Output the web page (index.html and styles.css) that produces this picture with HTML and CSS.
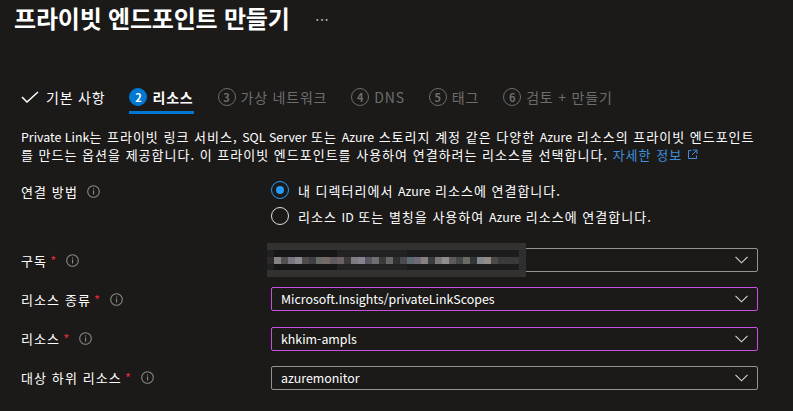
FILE: index.html
```html
<!DOCTYPE html>
<html lang="ko">
<head>
<meta charset="utf-8">
<link rel="stylesheet" href="styles.css">
</head>
<body>
<header class="title-bar">
  <h1 class="title">프라이빗 엔드포인트 만들기</h1>
  <span class="more">...</span>
</header>

<nav class="tabs">
  <div class="tab done">
    <svg class="check" width="18" height="12" viewBox="0 0 18 12"><polyline points="1,6 6,11 17,1" fill="none" stroke="#ffffff" stroke-width="1.5"/></svg>
    <span>기본 사항</span>
  </div>
  <div class="tab active">
    <span class="num">2</span>
    <span>리소스</span>
  </div>
  <div class="tab disabled">
    <span class="num">3</span>
    <span>가상 네트워크</span>
  </div>
  <div class="tab disabled">
    <span class="num">4</span>
    <span>DNS</span>
  </div>
  <div class="tab disabled">
    <span class="num">5</span>
    <span>태그</span>
  </div>
  <div class="tab disabled">
    <span class="num">6</span>
    <span>검토 + 만들기</span>
  </div>
</nav>

<p class="desc"><span class="en">Private Link</span>는 프라이빗 링크 서비스, <span class="en">SQL Server</span> 또는 <span class="en">Azure</span> 스토리지 계정 같은 다양한 <span class="en">Azure</span> 리소스의 프라이빗 엔드포인트<br>를 만드는 옵션을 제공합니다. 이 프라이빗 엔드포인트를 사용하여 연결하려는 리소스를 선택합니다. <a class="link" href="#">자세한 정보 <svg width="11" height="11" viewBox="0 0 11 11"><path d="M4.5 1.5H1.5V9.5H9.5V6.5M6 1H10V5M10 1L5 6" fill="none" stroke="#3f8fdc" stroke-width="1"/></svg></a></p>

<div class="form">
  <div class="row radio-row">
    <div class="label"><span>연결 방법</span><svg class="info" width="13" height="13" viewBox="0 0 13 13"><circle cx="6.5" cy="6.5" r="5.8" fill="none" stroke="#8a8886" stroke-width="1.1"/><rect x="6" y="5.5" width="1.1" height="4" fill="#8a8886"/><rect x="6" y="3.4" width="1.1" height="1.1" fill="#8a8886"/></svg></div>
    <div class="radios">
      <label class="radio checked"><span class="dot"></span><span>내 디렉터리에서 <span class="en">Azure</span> 리소스에 연결합니다.</span></label>
      <label class="radio"><span class="dot"></span><span>리소스 <span class="en">ID</span> 또는 별칭을 사용하여 <span class="en">Azure</span> 리소스에 연결합니다.</span></label>
    </div>
  </div>

  <div class="fields">
    <div class="row">
      <div class="label"><span>구독</span><span class="req">*</span><svg class="info" width="13" height="13" viewBox="0 0 13 13"><circle cx="6.5" cy="6.5" r="5.8" fill="none" stroke="#8a8886" stroke-width="1.1"/><rect x="6" y="5.5" width="1.1" height="4" fill="#8a8886"/><rect x="6" y="3.4" width="1.1" height="1.1" fill="#8a8886"/></svg></div>
      <div class="select">
        <span class="value"></span>
        <svg class="chev" width="13" height="8" viewBox="0 0 13 8"><polyline points="0.5,0.8 6.5,6.8 12.5,0.8" fill="none" stroke="#d6d6d6" stroke-width="1.1"/></svg>
        <div class="mosaic"></div>
      </div>
    </div>
    <div class="row">
      <div class="label"><span>리소스 종류</span><span class="req">*</span><svg class="info" width="13" height="13" viewBox="0 0 13 13"><circle cx="6.5" cy="6.5" r="5.8" fill="none" stroke="#8a8886" stroke-width="1.1"/><rect x="6" y="5.5" width="1.1" height="4" fill="#8a8886"/><rect x="6" y="3.4" width="1.1" height="1.1" fill="#8a8886"/></svg></div>
      <div class="select dirty">
        <span class="value">Microsoft.Insights/privateLinkScopes</span>
        <svg class="chev" width="13" height="8" viewBox="0 0 13 8"><polyline points="0.5,0.8 6.5,6.8 12.5,0.8" fill="none" stroke="#d6d6d6" stroke-width="1.1"/></svg>
      </div>
    </div>
    <div class="row">
      <div class="label"><span>리소스</span><span class="req">*</span><svg class="info" width="13" height="13" viewBox="0 0 13 13"><circle cx="6.5" cy="6.5" r="5.8" fill="none" stroke="#8a8886" stroke-width="1.1"/><rect x="6" y="5.5" width="1.1" height="4" fill="#8a8886"/><rect x="6" y="3.4" width="1.1" height="1.1" fill="#8a8886"/></svg></div>
      <div class="select dirty">
        <span class="value">khkim-ampls</span>
        <svg class="chev" width="13" height="8" viewBox="0 0 13 8"><polyline points="0.5,0.8 6.5,6.8 12.5,0.8" fill="none" stroke="#d6d6d6" stroke-width="1.1"/></svg>
      </div>
    </div>
    <div class="row">
      <div class="label"><span>대상 하위 리소스</span><span class="req">*</span><svg class="info" width="13" height="13" viewBox="0 0 13 13"><circle cx="6.5" cy="6.5" r="5.8" fill="none" stroke="#8a8886" stroke-width="1.1"/><rect x="6" y="5.5" width="1.1" height="4" fill="#8a8886"/><rect x="6" y="3.4" width="1.1" height="1.1" fill="#8a8886"/></svg></div>
      <div class="select">
        <span class="value">azuremonitor</span>
        <svg class="chev" width="13" height="8" viewBox="0 0 13 8"><polyline points="0.5,0.8 6.5,6.8 12.5,0.8" fill="none" stroke="#d6d6d6" stroke-width="1.1"/></svg>
      </div>
    </div>
  </div>
</div>
</body>
</html>
```

FILE: styles.css
```css
* { box-sizing: border-box; }

html, body {
  margin: 0;
  padding: 0;
  background: #1b1a19;
  color: #ffffff;
  font-family: "Noto Sans CJK KR", "Noto Sans", sans-serif;
  font-size: 13px;
  letter-spacing: 1px;
  overflow: hidden;
}

.en {
  font-size: 12.4px;
  letter-spacing: 0;
}

.title-bar {
  display: flex;
  align-items: center;
  height: 36px;
  padding-left: 14px;
}

.title {
  margin: 0;
  font-size: 24px;
  font-weight: 700;
  line-height: 36px;
  letter-spacing: -0.2px;
}

.more {
  margin-left: 26px;
  margin-top: -6px;
  color: #c8c6c4;
  font-size: 13px;
  letter-spacing: 1px;
}

.tabs {
  display: flex;
  margin-top: 49px;
  padding-left: 21px;
  height: 29px;
}

.tab {
  display: flex;
  align-items: center;
  gap: 5px;
  height: 29px;
  padding-bottom: 3px;
  border-bottom: 3px solid transparent;
  font-size: 14px;
  letter-spacing: 0.8px;
  margin-right: 24px;
  white-space: nowrap;
}

.tab.done { gap: 7px; }

.tab.active {
  border-bottom-color: #0078d4;
  font-weight: 700;
}

.tab.disabled { color: #6e6d6c; }

.num {
  display: inline-flex;
  align-items: center;
  justify-content: center;
  width: 18px;
  height: 18px;
  border-radius: 50%;
  font-size: 11px;
  font-weight: 700;
  letter-spacing: 0;
  border: 1.5px solid #6e6d6c;
}

.tab.active .num {
  background: #0078d4;
  border-color: #0078d4;
  color: #ffffff;
}

.desc {
  margin: 14px 0 0;
  padding-left: 21px;
  line-height: 18px;
  font-size: 13px;
  white-space: nowrap;
}

.link {
  color: #3f8fdc;
  text-decoration: none;
}

.form {
  padding-left: 21px;
  margin-top: 15px;
}

.row {
  display: flex;
  align-items: center;
}

.radio-row { align-items: flex-start; }

.label {
  width: 250px;
  flex: none;
  display: flex;
  align-items: center;
  font-size: 13px;
  letter-spacing: 1.1px;
}

.radio-row .label {
  height: 22px;
  padding-top: 2px;
}

.req {
  color: #e0283a;
  margin-left: 3px;
  font-size: 13px;
  letter-spacing: 0;
}

.info { margin-left: 10px; }

.radio-row .info { margin-left: 9px; }

.radios {
  display: flex;
  flex-direction: column;
  gap: 4px;
}

.radio {
  display: flex;
  align-items: center;
  gap: 9px;
  height: 22px;
  white-space: nowrap;
}

.dot {
  width: 18px;
  height: 18px;
  border-radius: 50%;
  border: 1.5px solid #e1dfdd;
  display: inline-flex;
  align-items: center;
  justify-content: center;
}

.radio.checked .dot { border-color: #2899f5; }

.radio.checked .dot::after {
  content: "";
  width: 8px;
  height: 8px;
  border-radius: 50%;
  background: #2899f5;
}

.fields {
  display: flex;
  flex-direction: column;
  gap: 15.33px;
  margin-top: 21px;
}

.select {
  position: relative;
  width: 487px;
  height: 24px;
  border: 1px solid #959391;
  border-radius: 2px;
  display: flex;
  align-items: center;
  justify-content: space-between;
  padding: 0 9px 0 9px;
}

.select.dirty { border-color: #c94fe0; }

.value {
  font-size: 12.4px;
  letter-spacing: 0;
}

.chev { flex: none; }

.mosaic {
  position: absolute;
  left: -5px;
  top: -6px;
  width: 259px;
  height: 34px;
  background:
    linear-gradient(90deg,
      #2a2a2b 0 7px, #848382 7px 14px, #555050 14px 21px, #7b7580 21px 28px, #8a8a90 28px 35px,
      #504a4a 35px 42px, #3d3f42 42px 49px, #686a66 49px 56px, #736a63 56px 63px, #5e5a60 63px 70px,
      #6a5f62 70px 77px, #3a3838 77px 84px, #7e7c82 84px 91px, #8a8190 91px 98px, #5a5560 98px 105px,
      #6f6f72 105px 112px, #3a3a3c 112px 119px, #666866 119px 126px, #302f32 126px 133px, #4a4b4e 133px 140px,
      #5b6a70 140px 147px, #706a75 147px 154px, #887f80 154px 161px, #3b3c3e 161px 168px, #7c7877 168px 175px,
      #908d90 175px 182px, #5d5a5a 182px 189px, #44484a 189px 196px, #6a6b60 196px 203px, #333536 203px 210px,
      #828890 210px 217px, #958c86 217px 224px, #4b4c4a 224px 231px, #3a3a3a 231px 252px, #2f2f2f 252px 259px)
      0 14px / 100% 7px no-repeat,
    linear-gradient(90deg, #1f2022 0 7px, #151618 7px 70px, #222224 70px 140px, #1d1c1c 140px 252px, #2f2f2f 252px)
      0 7px / 100% 20px no-repeat,
    #333231;
}
```
